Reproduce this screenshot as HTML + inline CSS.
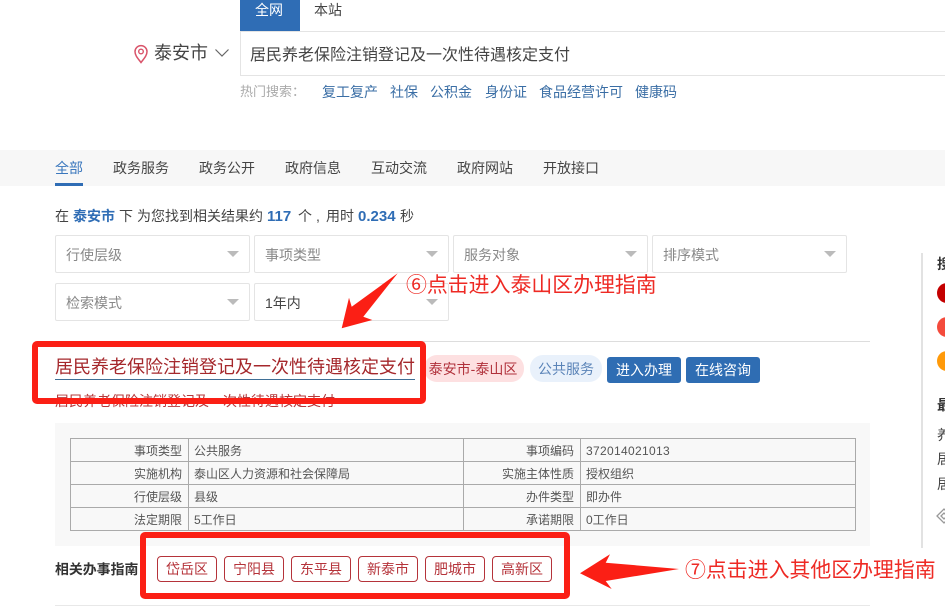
<!DOCTYPE html>
<html lang="zh">
<head>
<meta charset="utf-8">
<title>居民养老保险注销登记及一次性待遇核定支付</title>
<style>
html,body{margin:0;padding:0;background:#fff}
body{width:945px;height:614px;position:relative;overflow:hidden;font-family:"Liberation Sans","Noto Sans CJK SC",sans-serif;color:#333}
.a{position:absolute;white-space:nowrap}
.t{position:absolute;white-space:nowrap;line-height:20px}
.nav{font-size:14px;color:#444;top:158px}
.link{font-size:14px;color:#3a6ea5;top:81px}
.st{font-size:14px;color:#444;top:206px}
.st b{color:#2f6db5}
.sel{position:absolute;width:193px;height:36px;border:1px solid #e4e4e4;border-radius:2px;background:#fff;box-sizing:content-box}
.sel span{position:absolute;left:10px;top:9px;font-size:14px;line-height:20px;color:#888;white-space:nowrap}
.sel i{position:absolute;right:10px;top:15px;width:0;height:0;border-left:6px solid transparent;border-right:6px solid transparent;border-top:6px solid #bbb}
table{position:absolute;left:70px;top:438px;width:785px;height:93px;border-collapse:collapse;table-layout:fixed;font-size:12px;color:#555}
td{border:1px solid #aaa;padding:2px 5px 0 5px;height:20px;line-height:20px;white-space:nowrap}
td.l{text-align:right;padding-right:6px}
.city{position:absolute;top:556px;width:58px;height:24px;border:1px solid #b5333a;border-radius:4px;text-align:center;font-size:14px;line-height:24px;color:#b5333a}
.btn{position:absolute;top:357px;height:26px;background:#2f6db3;border-radius:3px;color:#fff;font-size:14px;line-height:26px;text-align:center}
.box{position:absolute;border:6px solid #fb1f15;border-radius:5px;box-sizing:border-box}
.note{position:absolute;white-space:nowrap;font-size:20.9px;line-height:28px;color:#ee2a24}
</style>
</head>
<body>
<div class="a" style="left:240px;top:0;width:60px;height:31px;background:#2f6db5"></div>
<div class="t" style="left:255px;top:0;font-size:14px;color:#fff">全网</div>
<div class="t" style="left:314px;top:0;font-size:14px;color:#444">本站</div>

<svg class="a" style="left:133px;top:44px" width="16" height="20" viewBox="0 0 16 20"><path d="M8 18.5C5 14.5 2 11.5 2 7.6A6 6 0 0 1 14 7.6C14 11.5 11 14.5 8 18.5Z" fill="none" stroke="#d9546a" stroke-width="1.5"/><circle cx="8" cy="7.5" r="2.3" fill="none" stroke="#d9546a" stroke-width="1.4"/></svg>
<div class="t" style="left:154px;top:43px;font-size:18px;color:#444">泰安市</div>
<svg class="a" style="left:214px;top:47px" width="16" height="12" viewBox="0 0 16 12"><path d="M1.5 2.5L8 9L14.5 2.5" fill="none" stroke="#666" stroke-width="1.2"/></svg>

<div class="a" style="left:240px;top:31px;width:720px;height:45px;border:1px solid #e4e4e4;box-sizing:border-box"></div>
<div class="t" style="left:250px;top:46px;font-size:16px;color:#444">居民养老保险注销登记及一次性待遇核定支付</div>

<div class="t" style="left:240px;top:82px;font-size:13px;color:#aaa">热门搜索：</div>
<div class="t link" style="left:322px;top:82px">复工复产</div>
<div class="t link" style="left:390px;top:82px">社保</div>
<div class="t link" style="left:430px;top:82px">公积金</div>
<div class="t link" style="left:485px;top:82px">身份证</div>
<div class="t link" style="left:539px;top:82px">食品经营许可</div>
<div class="t link" style="left:635px;top:82px">健康码</div>

<div class="a" style="left:0;top:150px;width:945px;height:36px;background:#f7f7f7"></div>
<div class="a" style="left:55px;top:183px;width:28px;height:3px;background:#2f6db5"></div>
<div class="t nav" style="left:55px;color:#3a77bd">全部</div>
<div class="t nav" style="left:113px">政务服务</div>
<div class="t nav" style="left:199px">政务公开</div>
<div class="t nav" style="left:285px">政府信息</div>
<div class="t nav" style="left:371px">互动交流</div>
<div class="t nav" style="left:457px">政府网站</div>
<div class="t nav" style="left:543px">开放接口</div>

<div class="t st" style="left:55px">在</div>
<div class="t st" style="left:73px"><b>泰安市</b></div>
<div class="t st" style="left:119px">下</div>
<div class="t st" style="left:137px">为您找到相关结果约</div>
<div class="t st" style="left:267px"><b style="font-size:15px">117</b></div>
<div class="t st" style="left:298px">个</div>
<div class="t st" style="left:316px">,</div>
<div class="t st" style="left:326px">用时</div>
<div class="t st" style="left:358px"><b style="font-size:15px">0.234</b></div>
<div class="t st" style="left:400px">秒</div>

<div class="sel" style="left:55px;top:235px"><span>行使层级</span><i></i></div>
<div class="sel" style="left:254px;top:235px"><span>事项类型</span><i></i></div>
<div class="sel" style="left:453px;top:235px"><span>服务对象</span><i></i></div>
<div class="sel" style="left:652px;top:235px"><span>排序模式</span><i></i></div>
<div class="sel" style="left:55px;top:283px"><span>检索模式</span><i></i></div>
<div class="sel" style="left:254px;top:283px"><span style="color:#444">1年内</span><i></i></div>

<div class="a" style="left:55px;top:341px;width:815px;height:1px;background:#ddd"></div>

<div class="a" style="left:55px;top:356px;font-size:18px;line-height:23px;color:#a5282c;height:23px;border-bottom:1px solid #3f6f96">居民养老保险注销登记及一次性待遇核定支付</div>
<div class="a" style="left:55px;top:391px;font-size:14px;line-height:20px;color:#b5383a">居民养老保险注销登记及一次性待遇核定支付</div>

<div class="a" style="left:424px;top:355px;width:98px;height:27px;padding-right:2px;border-radius:13px;background:#fde0e1;color:#b0303a;font-size:14px;line-height:28px;text-align:center">泰安市-泰山区</div>
<div class="a" style="left:530px;top:355px;width:72px;height:27px;border-radius:13px;background:#e9f1fb;color:#5b84b8;font-size:14px;line-height:28px;text-align:center">公共服务</div>
<div class="btn" style="left:607px;width:74px">进入办理</div>
<div class="btn" style="left:686px;width:74px">在线咨询</div>

<div class="a" style="left:55px;top:423px;width:815px;height:123px;background:#f8f8f8"></div>
<table>
<colgroup><col style="width:118px"><col style="width:275px"><col style="width:117px"><col style="width:275px"></colgroup>
<tr><td class="l">事项类型</td><td>公共服务</td><td class="l">事项编码</td><td style="letter-spacing:.33px">372014021013</td></tr>
<tr><td class="l">实施机构</td><td>泰山区人力资源和社会保障局</td><td class="l">实施主体性质</td><td>授权组织</td></tr>
<tr><td class="l">行使层级</td><td>县级</td><td class="l">办件类型</td><td>即办件</td></tr>
<tr><td class="l">法定期限</td><td>5工作日</td><td class="l">承诺期限</td><td>0工作日</td></tr>
</table>

<div class="a" style="left:55px;top:559px;font-size:13.9px;line-height:20px;font-weight:bold;color:#333">相关办事指南</div>
<div class="city" style="left:157px">岱岳区</div>
<div class="city" style="left:224px">宁阳县</div>
<div class="city" style="left:291px">东平县</div>
<div class="city" style="left:358px">新泰市</div>
<div class="city" style="left:425px">肥城市</div>
<div class="city" style="left:492px">高新区</div>
<div class="a" style="left:55px;top:605px;width:815px;height:1px;background:#e8e8e8"></div>

<div class="a" style="left:921px;top:253px;width:2px;height:295px;background:#e2e2e2"></div>
<div class="t" style="left:937px;top:254px;font-size:14px;font-weight:bold;color:#333">搜</div>
<div class="a" style="left:937px;top:283px;width:20px;height:20px;border-radius:50%;background:#c40000"></div>
<div class="a" style="left:937px;top:317px;width:20px;height:20px;border-radius:50%;background:#f44b3c"></div>
<div class="a" style="left:937px;top:351px;width:20px;height:20px;border-radius:50%;background:#ff9a0a"></div>
<div class="t" style="left:937px;top:395px;font-size:14px;font-weight:bold;color:#333">最</div>
<div class="t" style="left:937px;top:425px;font-size:14px;color:#444">养</div>
<div class="t" style="left:937px;top:449px;font-size:14px;color:#444">居</div>
<div class="t" style="left:937px;top:474px;font-size:14px;color:#444">居</div>
<svg class="a" style="left:936px;top:507px" width="9" height="18" viewBox="0 0 9 18"><path d="M1 9L8 2L15 9L8 16Z M5 9L8 6L11 9L8 12Z" fill="none" stroke="#999" stroke-width="1.3"/></svg>

<div class="box" style="left:32px;top:341px;width:394px;height:63px"></div>
<div class="box" style="left:140px;top:532px;width:430px;height:67px"></div>

<svg class="a" style="left:0;top:0" width="945" height="614" viewBox="0 0 945 614">
<polygon points="397.7,273.3 351.7,306.7 349,297.7 341.7,328.3 372.3,320 363.3,316.7" fill="#fb1f15"/>
<polygon points="679,569 605.7,562.7 610,554.3 580,573.3 611.7,589 605.7,581" fill="#fb1f15"/>
</svg>

<div class="note" style="left:406px;top:272px">⑥点击进入泰山区办理指南</div>
<div class="note" style="left:685px;top:557px">⑦点击进入其他区办理指南</div>
</body>
</html>
